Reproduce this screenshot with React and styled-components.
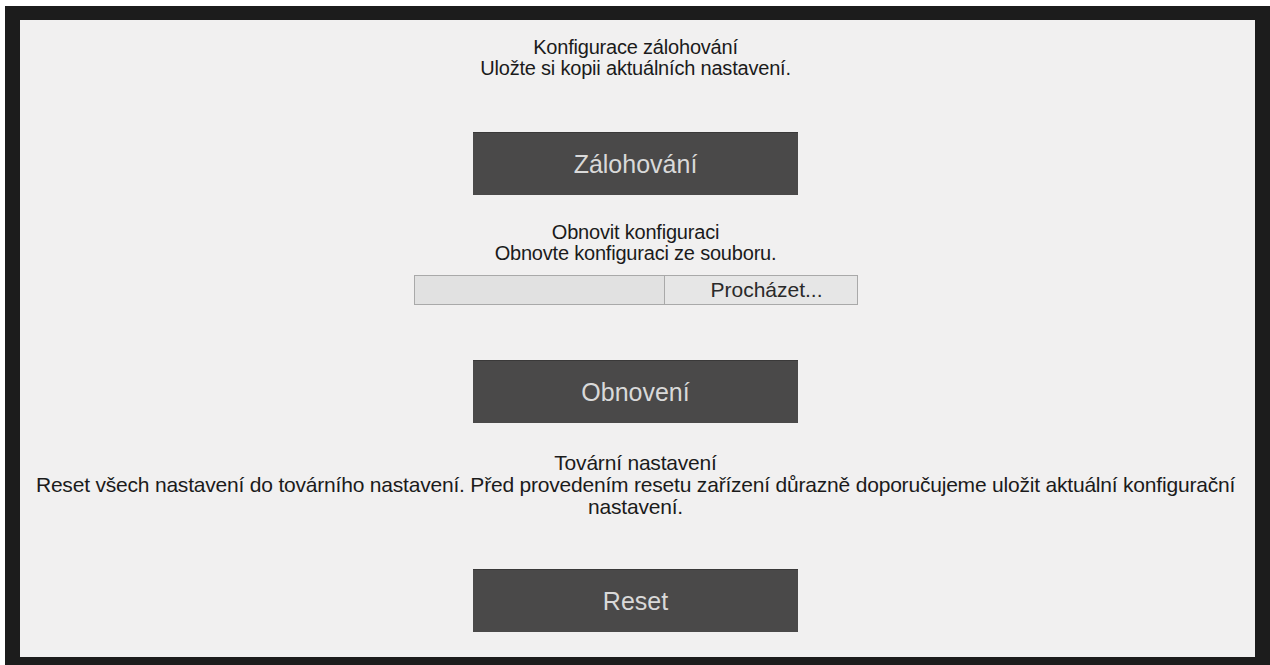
import React from "react";
import styled, { createGlobalStyle } from "styled-components";

const GlobalStyle = createGlobalStyle`
  html, body {
    margin: 0;
    padding: 0;
    background: #ffffff;
    overflow: hidden;
  }
  body {
    font-family: "Liberation Sans", Arial, sans-serif;
    color: #1b1b1b;
  }
`;

const Frame = styled.div`
  margin: 6px 0 0 5px;
  border: 15px solid #1c1c1c;
  border-top-width: 14px;
  background: #f1f0f0;
  height: 637px;
`;

const Content = styled.div`
  display: flex;
  flex-direction: column;
  align-items: center;
  padding: 17px 12px 0 8px;
  text-align: center;
`;

const Text = styled.div`
  font-size: ${(p) => p.$size || 20}px;
  line-height: ${(p) => p.$line || 21}px;
  letter-spacing: -0.2px;
`;

const Section = styled.div`
  display: flex;
  flex-direction: column;
  align-items: center;
  margin-top: ${(p) => p.$top}px;
`;

const ActionButton = styled.button`
  width: 325px;
  height: 63px;
  margin-top: ${(p) => p.$top}px;
  border: none;
  border-top: 1px solid #3a3939;
  background: #4a4949;
  color: #d9d9d9;
  font-family: "Liberation Sans", Arial, sans-serif;
  font-size: 25px;
  cursor: pointer;
`;

const FileRow = styled.div`
  display: flex;
  margin-top: 11px;
  height: 28px;
  border: 1px solid #a9a9a9;
`;

const FileField = styled.div`
  width: 249px;
  background: #e1e1e1;
`;

const BrowseButton = styled.button`
  width: 193px;
  border: none;
  border-left: 1px solid #a9a9a9;
  background: #e6e6e6;
  color: #2a2a2a;
  font-family: "Liberation Sans", Arial, sans-serif;
  font-size: 21px;
  padding: 0 0 0 12px;
`;

export default function App() {
  return (
    <>
      <GlobalStyle />
      <Frame>
        <Content>
          <Section $top={0}>
            <Text>Konfigurace zálohování</Text>
            <Text>Uložte si kopii aktuálních nastavení.</Text>
          </Section>
          <ActionButton $top={53}>Zálohování</ActionButton>

          <Section $top={27}>
            <Text>Obnovit konfiguraci</Text>
            <Text>Obnovte konfiguraci ze souboru.</Text>
          </Section>
          <FileRow>
            <FileField />
            <BrowseButton>Procházet...</BrowseButton>
          </FileRow>
          <ActionButton $top={55}>Obnovení</ActionButton>

          <Section $top={29}>
            <Text $size={21} $line={22}>Tovární nastavení</Text>
            <Text $size={21} $line={22}>
              Reset všech nastavení do továrního nastavení. Před provedením
              resetu zařízení důrazně doporučujeme uložit aktuální konfigurační
              nastavení.
            </Text>
          </Section>
          <ActionButton $top={51}>Reset</ActionButton>
        </Content>
      </Frame>
    </>
  );
}
